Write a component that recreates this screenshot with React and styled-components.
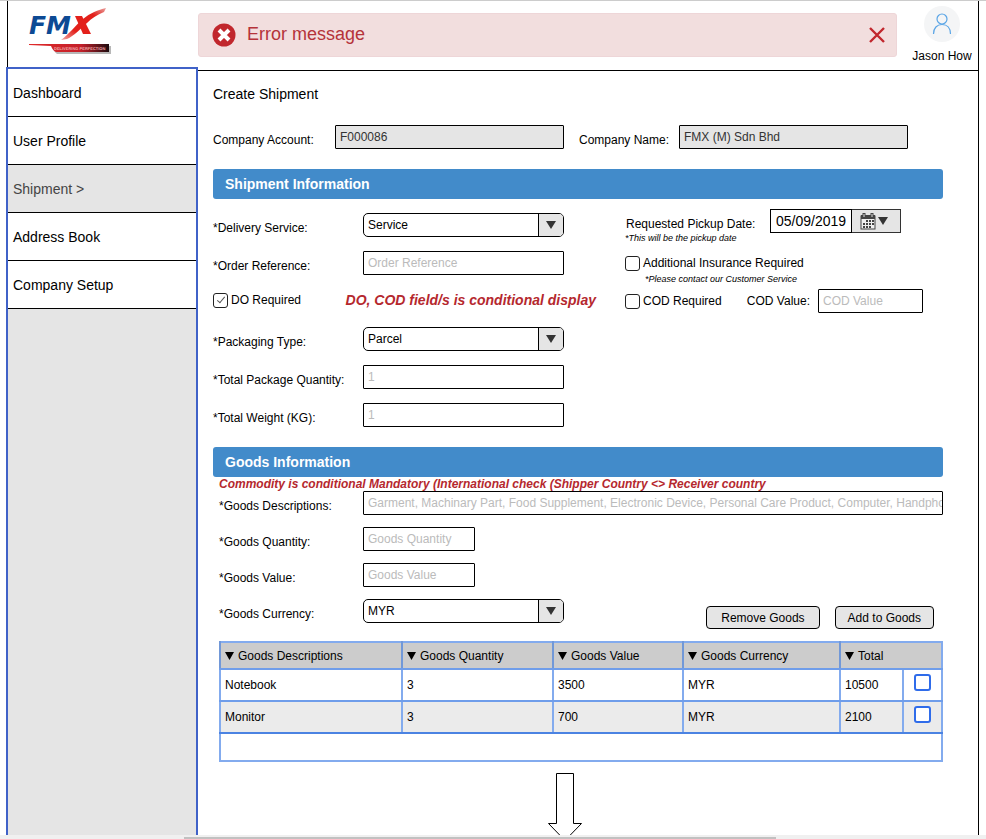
import React from "react";
import styled, { createGlobalStyle } from "styled-components";

const GlobalStyle = createGlobalStyle`
  *, *::before, *::after { box-sizing: border-box; }
  body {
    margin: 0;
    background: #fff;
    color: #000;
    font: 12px/18px "Liberation Sans", Arial, sans-serif;
  }
  input, select, button { font: inherit; color: inherit; margin: 0; }
`;

const Window = styled.div`
  display: flex;
  flex-direction: column;
  height: 100vh;
  border-top: 1px solid #ccc;
`;

const Frame = styled.div`
  flex: 1;
  min-height: 0;
  overflow: hidden;
  display: grid;
  grid-template-columns: 192px minmax(0, 1fr);
  padding: 0 7px 0 6px;
`;

const ScrollTrack = styled.div`
  flex: none;
  height: 4px;
  padding-top: 2px;
  background: #f0f0f0;
`;

const ScrollThumb = styled.div`
  width: 60%;
  height: 2px;
  margin-left: 184px;
  background: #c1c1c1;
`;

const Side = styled.div`
  display: flex;
  flex-direction: column;
`;

const LogoArea = styled.div`
  height: 66px;
  margin-left: 1px;
  padding: 6px 0 0 18px;
  border-left: 1px solid #000;
`;

const Nav = styled.nav`
  flex: 1;
  border: 2px solid #4062c8;
  border-bottom: 0;
  background: #e5e5e5;
`;

const NavItem = styled.a`
  display: block;
  height: 48px;
  padding-left: 5px;
  border-bottom: 1px solid #000;
  background: ${(p) => (p.$active ? "#e5e5e5" : "#fff")};
  color: ${(p) => (p.$active ? "#444" : "#000")};
  font-size: 14px;
  line-height: 48px;
  text-decoration: none;
`;

const Main = styled.div`
  border-right: 1px solid #000;
`;

const Header = styled.header`
  display: flex;
  height: 70px;
  border-bottom: 1px solid #000;
`;

const Alert = styled.div`
  flex: 1;
  display: flex;
  align-items: center;
  gap: 11px;
  height: 44px;
  margin-top: 12px;
  padding: 0 11px 0 13px;
  border: 1px solid #eed6d8;
  border-radius: 3px;
  background: #f2dede;
  color: #b5333a;
  font-size: 18px;
  line-height: 40px;
`;

const AlertText = styled.span`
  flex: 1;
  padding-bottom: 2px;
`;

const CloseButton = styled.button`
  display: flex;
  padding: 0;
  border: 0;
  background: none;
`;

const User = styled.div`
  display: flex;
  flex-direction: column;
  align-items: center;
  gap: 5px;
  width: 72px;
  margin-left: 9px;
  padding-top: 5px;
`;

const Content = styled.main`
  padding: 14px 35px 0 15px;
`;

const Title = styled.h1`
  margin: 0 0 22px;
  font-size: 14px;
  font-weight: 400;
  line-height: 18px;
`;

const CompanyFields = styled.div`
  display: grid;
  grid-template-columns: 351fr 329fr;
  gap: 15px;
  margin-bottom: 20px;
  padding-right: 35px;
`;

const CompanyPair = styled.div`
  display: grid;
  grid-template-columns: ${(p) => p.$label}px minmax(0, 1fr);
  align-items: end;
`;

const Label = styled.label`
  white-space: nowrap;
`;

const TextInput = styled.input`
  width: ${(p) => p.$width || "100%"};
  min-width: 0;
  height: 24px;
  padding: 0 0 0 4px;
  border: 1px solid #000;
  border-radius: 1px;
  background: ${(p) => (p.readOnly ? "#e5e5e5" : "#fff")};
  color: ${(p) => (p.readOnly ? "#333" : "#000")};
  outline: 0;

  &::placeholder { color: #bbb; opacity: 1; }
`;

const Banner = styled.h2`
  margin: 0;
  padding-left: 12px;
  border-radius: 3px;
  background: #428bca;
  color: #fff;
  font-size: 14px;
  font-weight: 700;
  line-height: 30px;
`;

const ShipmentGrid = styled.div`
  display: grid;
  grid-template-columns: 412fr 318fr;
  margin: 10px 0 20px;
`;

const LeftColumn = styled.div`
  display: flex;
  flex-direction: column;
  gap: 14px;
  padding: 4px 61px 0 0;
`;

const FieldRow = styled.div`
  display: grid;
  grid-template-columns: 150px minmax(0, 1fr);
  align-items: end;
`;

const DoRow = styled.div`
  display: flex;
  align-items: center;
  justify-content: space-between;
  height: 24px;
  margin-right: -32px;
  padding-bottom: 2px;
`;

const CheckLabel = styled.label`
  display: flex;
  align-items: center;
  gap: 3px;
  white-space: nowrap;
`;

const Checkbox = styled.input`
  appearance: none;
  display: grid;
  place-items: center;
  flex: none;
  width: 15px;
  height: 15px;
  border: 1px solid #222;
  border-radius: 3px;
  background: #fff;

  &:checked::after {
    content: "";
    width: 4px;
    height: 8px;
    margin-bottom: 2px;
    border: solid #555;
    border-width: 0 1px 1px 0;
    transform: rotate(40deg);
  }
`;

const Conditional = styled.strong`
  color: #b5282e;
  font-size: ${(p) => (p.$small ? 12 : 14)}px;
  font-style: italic;
  line-height: 14px;
  white-space: nowrap;
`;

const SelectBox = styled.div`
  display: grid;
  height: 24px;
  border: 1px solid #000;
  border-radius: 5px;
  overflow: hidden;
  background: #fff;
`;

const NativeSelect = styled.select`
  grid-area: 1 / 1;
  appearance: none;
  width: 100%;
  padding: 0 30px 0 4px;
  border: 0;
  outline: 0;
  background: transparent;
`;

const SelectArrow = styled.span`
  grid-area: 1 / 1;
  justify-self: end;
  display: grid;
  place-items: center;
  width: 25px;
  border-left: 1px solid #000;
  background: #e5e5e5;
  pointer-events: none;
`;

const RightColumn = styled.div`
  display: flex;
  flex-direction: column;
`;

const DateRow = styled.div`
  display: flex;
  align-items: flex-end;
  justify-content: space-between;
  padding: 0 42px 0 1px;
`;

const DateControl = styled.div`
  display: flex;
  height: 24px;
`;

const DateInput = styled.input`
  width: 82px;
  padding: 0 0 0 5px;
  border: 1px solid #000;
  background: #fff;
  outline: 0;
  font-size: 14px;
`;

const DateButton = styled.button`
  display: flex;
  align-items: center;
  justify-content: center;
  gap: 2px;
  width: 49px;
  padding: 0 4px 0 0;
  border: 1px solid #333;
  border-left: 0;
  background: #e5e5e5;
`;

const Hint = styled.small`
  font-size: 9px;
  font-style: italic;
  line-height: 10px;
`;

const DateHint = styled(Hint)`
  margin-bottom: 12px;
`;

const InsuranceHint = styled(Hint)`
  margin: 3px 0 5px;
  padding-left: 20px;
`;

const InsuranceLabel = styled(CheckLabel)`
  height: 16px;
`;

const CodRow = styled.div`
  display: flex;
  align-items: center;
  justify-content: space-between;
  padding-right: 20px;
`;

const CodValue = styled.div`
  display: flex;
  align-items: center;
  gap: 8px;
`;

const Goods = styled.section`
  display: flex;
  flex-direction: column;
  padding-left: 6px;
`;

const GoodsForm = styled.div`
  display: grid;
  gap: 12px;
`;

const GoodsRow = styled.div`
  display: grid;
  grid-template-columns: 144px minmax(0, 1fr);
  align-items: end;
`;

const CurrencyRow = styled.div`
  display: flex;
  align-items: flex-start;
  justify-content: space-between;
  gap: 20px;
  padding-right: 9px;
`;

const CurrencyField = styled(GoodsRow)`
  width: 345px;
`;

const Actions = styled.div`
  display: flex;
  gap: 15px;
  padding-top: 7px;
`;

const Button = styled.button`
  height: 23px;
  padding: 0 ${(p) => p.$pad}px;
  border: 1px solid #000;
  border-radius: 4px;
  background: #e5e5e5;
  white-space: nowrap;
`;

const Table = styled.table`
  width: 100%;
  margin-top: 12px;
  border-collapse: collapse;
  table-layout: fixed;
  border: 2px solid #83abee;
`;

const Th = styled.th`
  height: 27px;
  padding: 0 0 0 4px;
  border-left: 2px solid #7198d8;
  border-bottom: 2px solid #6f9dea;
  background: #ccc;
  font-weight: 400;
  text-align: left;
  white-space: nowrap;
`;

const HeadLabel = styled.span`
  display: flex;
  align-items: center;
  gap: 4px;
`;

const Row = styled.tr`
  height: 32px;
  background: ${(p) => (p.$shaded ? "#ebebeb" : "#fff")};
`;

const Td = styled.td`
  padding: 0 0 0 4px;
  border-left: 2px solid #83abee;
  border-bottom: 2px solid ${(p) => (p.$last ? "#4b83e2" : "#6f9dea")};
`;

const CheckCell = styled(Td)`
  padding: 0 0 5px;
`;

const EmptyCell = styled.td`
  height: 28px;
  padding: 0;
`;

const RowCheckbox = styled(Checkbox)`
  width: 17px;
  height: 17px;
  margin: 0 auto;
  border: 2px solid #2f6cea;
`;

const ArrowHolder = styled.div`
  padding: 11px 0 0 335px;
`;

const NAV = ["Dashboard", "User Profile", "Shipment >", "Address Book", "Company Setup"];
const COLUMNS = [
  { name: "Goods Descriptions", width: "182px" },
  { name: "Goods Quantity", width: "151px" },
  { name: "Goods Value", width: "130px" },
  { name: "Goods Currency", width: "157px" },
];
const GOODS = [
  ["Notebook", "3", "3500", "MYR", "10500"],
  ["Monitor", "3", "700", "MYR", "2100"],
];

function Triangle({ width = 10, height = 8, color = "#333" }) {
  return (
    <svg width={width} height={height} viewBox="0 0 10 8" preserveAspectRatio="none" aria-hidden="true">
      <path d="M0 0h10L5 8z" fill={color} />
    </svg>
  );
}

function Logo() {
  return (
    <svg width="88" height="50" viewBox="26 7 88 50" role="img" aria-label="FMX Delivering Perfection">
      <defs>
        <linearGradient id="swoosh" x1="0" y1="1" x2="1" y2="0">
          <stop offset="0" stopColor="#f0aaa7" />
          <stop offset=".3" stopColor="#e3201b" />
          <stop offset=".75" stopColor="#e3201b" />
          <stop offset="1" stopColor="#e9a09d" />
        </linearGradient>
        <linearGradient id="bar" x1="0" x2="1" y1="0" y2="0">
          <stop offset="0" stopColor="#e02a2a" />
          <stop offset=".65" stopColor="#c4202a" />
          <stop offset="1" stopColor="#1d0c10" />
        </linearGradient>
      </defs>
      <text x="29" y="34" fontFamily="DejaVu Sans, sans-serif" fontSize="25" fontWeight="700" fontStyle="italic" fill="#0d4a94">FM</text>
      <path d="M61 40C68 35 76 25 83 19C90 13 98 10 106 8L104 12C97 15 92 18 87 23C80 29 74 36 67 39z" fill="url(#swoosh)" />
      <path d="M75 16h7l9 18h-8z" fill="#e3201b" />
      <path d="M31 46h21q2 6 5 8h54V46z" fill="#999" opacity=".7" />
      <path d="M29 44h80v8H56q-3-1-5-6l-22-1z" fill="url(#bar)" />
      <text x="54" y="50" fontFamily="Liberation Sans, sans-serif" fontSize="4" fontWeight="700" fill="#f1a6a6" textRendering="geometricPrecision">DELIVERING PERFECTION</text>
    </svg>
  );
}

function ErrorIcon() {
  return (
    <svg width="24" height="24" viewBox="0 0 24 24" aria-hidden="true">
      <circle cx="12" cy="12" r="11.5" fill="#c1272d" />
      <path d="M7 7l10 10M17 7L7 17" stroke="#fff" strokeWidth="4" />
    </svg>
  );
}

function CalendarIcon() {
  return (
    <svg width="16" height="17" viewBox="0 0 16 17" aria-hidden="true">
      <rect x="1" y="3" width="14" height="13" fill="#f0f0f0" stroke="#444" />
      <path d="M1 2h14v4H1z" fill="#444" />
      <path d="M4 0v4M12 0v4" stroke="#444" strokeWidth="3" />
      <path d="M4 1v3M12 1v3" stroke="#ddd" />
      <path d="M6 8h8M3 11h11M3 14h8" stroke="#444" strokeWidth="2" strokeDasharray="2 1" />
    </svg>
  );
}

function Avatar() {
  return (
    <svg width="36" height="36" viewBox="0 0 36 36" aria-hidden="true">
      <circle cx="18" cy="18" r="18" fill="#f4f5f6" />
      <g fill="none" stroke="#5aa5e6" strokeWidth="1.2">
        <circle cx="18" cy="13" r="5" />
        <path d="M9.500 28C9.500 22 13 18.500 18 18.500S26.500 22 26.500 28" />
      </g>
    </svg>
  );
}

function Select({ id, value }) {
  return (
    <SelectBox>
      <NativeSelect id={id} defaultValue={value}>
        <option>{value}</option>
      </NativeSelect>
      <SelectArrow>
        <Triangle />
      </SelectArrow>
    </SelectBox>
  );
}

export default function App() {
  return (
    <>
      <GlobalStyle />
      <Window>
        <Frame>
          <Side>
            <LogoArea><Logo /></LogoArea>
            <Nav>
              {NAV.map((item) => (
                <NavItem key={item} href="#" $active={item.startsWith("Shipment")}>{item}</NavItem>
              ))}
            </Nav>
          </Side>
          <Main>
            <Header>
              <Alert role="alert">
                <ErrorIcon />
                <AlertText>Error message</AlertText>
                <CloseButton type="button" aria-label="Close">
                  <svg width="16" height="16" viewBox="0 0 16 16" aria-hidden="true">
                    <path d="M1 1l14 14M15 1L1 15" stroke="#c1272d" strokeWidth="2.4" />
                  </svg>
                </CloseButton>
              </Alert>
              <User>
                <Avatar />
                <span>Jason How</span>
              </User>
            </Header>
            <Content>
              <Title>Create Shipment</Title>
              <CompanyFields>
                <CompanyPair $label={122}>
                  <Label htmlFor="account">Company Account:</Label>
                  <TextInput id="account" readOnly value="F000086" />
                </CompanyPair>
                <CompanyPair $label={100}>
                  <Label htmlFor="company">Company Name:</Label>
                  <TextInput id="company" readOnly value="FMX (M) Sdn Bhd" />
                </CompanyPair>
              </CompanyFields>

              <Banner>Shipment Information</Banner>
              <ShipmentGrid>
                <LeftColumn>
                  <FieldRow>
                    <Label htmlFor="service">*Delivery Service:</Label>
                    <Select id="service" value="Service" />
                  </FieldRow>
                  <FieldRow>
                    <Label htmlFor="order">*Order Reference:</Label>
                    <TextInput id="order" placeholder="Order Reference" />
                  </FieldRow>
                  <DoRow>
                    <CheckLabel><Checkbox type="checkbox" defaultChecked />DO Required</CheckLabel>
                    <Conditional>DO, COD field/s is conditional display</Conditional>
                  </DoRow>
                  <FieldRow>
                    <Label htmlFor="packaging">*Packaging Type:</Label>
                    <Select id="packaging" value="Parcel" />
                  </FieldRow>
                  <FieldRow>
                    <Label htmlFor="packages">*Total Package Quantity:</Label>
                    <TextInput id="packages" placeholder="1" />
                  </FieldRow>
                  <FieldRow>
                    <Label htmlFor="weight">*Total Weight (KG):</Label>
                    <TextInput id="weight" placeholder="1" />
                  </FieldRow>
                </LeftColumn>
                <RightColumn>
                  <DateRow>
                    <Label htmlFor="pickup">Requested Pickup Date:</Label>
                    <DateControl>
                      <DateInput id="pickup" defaultValue="05/09/2019" />
                      <DateButton type="button" aria-label="Choose date">
                        <CalendarIcon />
                        <Triangle />
                      </DateButton>
                    </DateControl>
                  </DateRow>
                  <DateHint>*This will be the pickup date</DateHint>
                  <InsuranceLabel><Checkbox type="checkbox" />Additional Insurance Required</InsuranceLabel>
                  <InsuranceHint>*Please contact our Customer Service</InsuranceHint>
                  <CodRow>
                    <CheckLabel><Checkbox type="checkbox" />COD Required</CheckLabel>
                    <CodValue>
                      <Label htmlFor="cod">COD Value:</Label>
                      <TextInput id="cod" $width="105px" placeholder="COD Value" />
                    </CodValue>
                  </CodRow>
                </RightColumn>
              </ShipmentGrid>

              <Banner>Goods Information</Banner>
              <Goods>
                <Conditional $small>
                  {"Commodity is conditional Mandatory (International check (Shipper Country <> Receiver country"}
                </Conditional>
                <GoodsForm>
                  <GoodsRow>
                    <Label htmlFor="descriptions">*Goods Descriptions:</Label>
                    <TextInput
                      id="descriptions"
                      placeholder="Garment, Machinary Part, Food Supplement, Electronic Device, Personal Care Product, Computer, Handphone"
                    />
                  </GoodsRow>
                  <GoodsRow>
                    <Label htmlFor="quantity">*Goods Quantity:</Label>
                    <TextInput id="quantity" $width="112px" placeholder="Goods Quantity" />
                  </GoodsRow>
                  <GoodsRow>
                    <Label htmlFor="value">*Goods Value:</Label>
                    <TextInput id="value" $width="112px" placeholder="Goods Value" />
                  </GoodsRow>
                  <CurrencyRow>
                    <CurrencyField>
                      <Label htmlFor="currency">*Goods Currency:</Label>
                      <Select id="currency" value="MYR" />
                    </CurrencyField>
                    <Actions>
                      <Button type="button" $pad={14}>Remove Goods</Button>
                      <Button type="button" $pad={12}>Add to Goods</Button>
                    </Actions>
                  </CurrencyRow>
                </GoodsForm>
                <Table>
                  <colgroup>
                    {COLUMNS.map((c) => <col key={c.name} width={c.width} />)}
                    <col width="63" />
                    <col />
                  </colgroup>
                  <thead>
                    <tr>
                      {COLUMNS.map((c) => (
                        <Th key={c.name}><HeadLabel><Triangle width={9} color="#000" />{c.name}</HeadLabel></Th>
                      ))}
                      <Th colSpan={2}><HeadLabel><Triangle width={9} color="#000" />Total</HeadLabel></Th>
                    </tr>
                  </thead>
                  <tbody>
                    {GOODS.map((cells, i) => (
                      <Row key={cells[0]} $shaded={i === 1}>
                        {cells.map((text, j) => <Td key={j} $last={i === 1}>{text}</Td>)}
                        <CheckCell $last={i === 1}>
                          <RowCheckbox type="checkbox" aria-label={`Select ${cells[0]}`} />
                        </CheckCell>
                      </Row>
                    ))}
                    <tr><EmptyCell colSpan={6} /></tr>
                  </tbody>
                </Table>
              </Goods>
              <ArrowHolder>
                <svg width="34" height="69" viewBox="0 0 34 69" aria-hidden="true">
                  <path d="M8.500 .5h17v50h8L17 67.500.5 50.500h8z" fill="#fff" stroke="#000" />
                </svg>
              </ArrowHolder>
            </Content>
          </Main>
        </Frame>
        <ScrollTrack><ScrollThumb /></ScrollTrack>
      </Window>
    </>
  );
}
